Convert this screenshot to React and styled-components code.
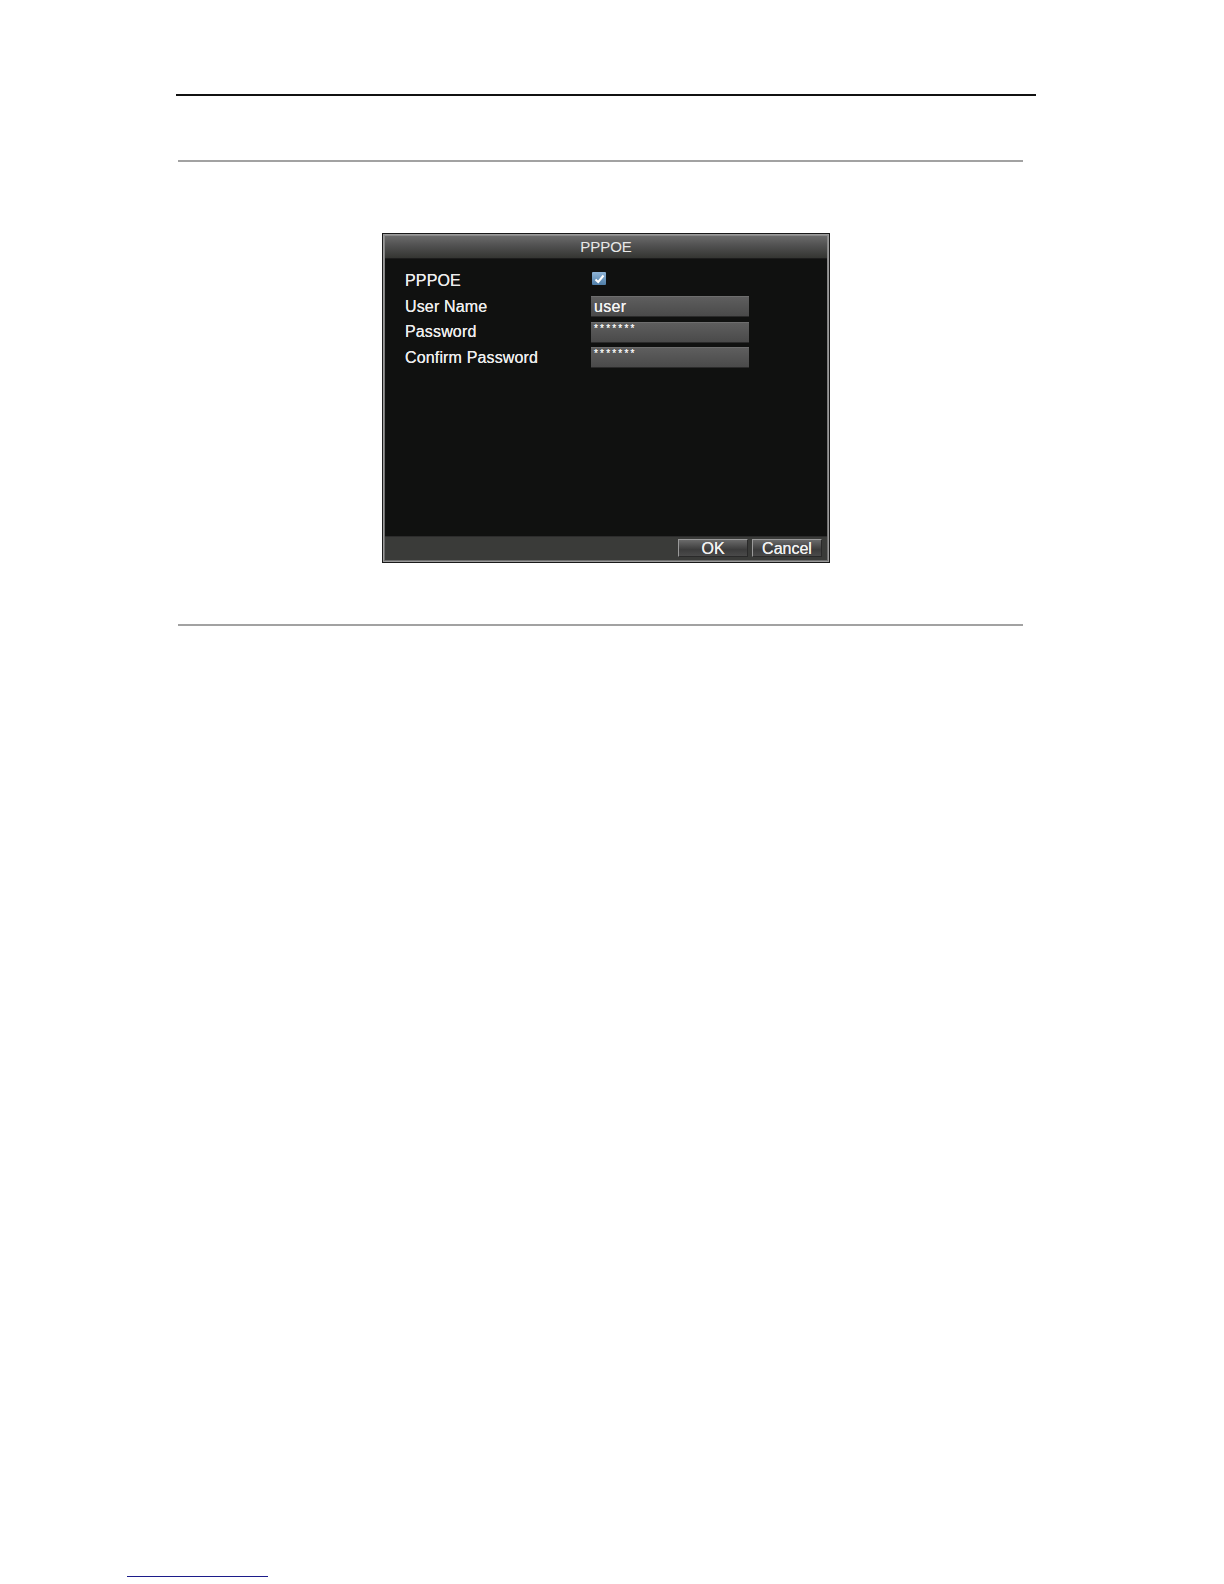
import React from 'react'
import styled, { createGlobalStyle } from 'styled-components'

const GlobalStyle = createGlobalStyle`
  html, body {
    margin: 0;
    padding: 0;
    background: #fff;
  }
  body {
    font-family: "Liberation Sans", Arial, sans-serif;
  }
`

const Page = styled.div`
  display: flex;
  flex-direction: column;
  background: #fff;
`

const TopRule = styled.div`
  flex: none;
  margin: 94px 0 0 176px;
  width: 860px;
  height: 1.5px;
  background: #111;
`

const Figure = styled.section`
  flex: none;
  margin: 64px 0 0 178px;
  width: 845px;
  border-top: 2px solid #a2a2a2;
  border-bottom: 2px solid #a2a2a2;
  padding: 71px 0 61px 204px;
  box-sizing: border-box;
`

const Dialog = styled.div`
  width: 448px;
  height: 330px;
  box-sizing: border-box;
  border: 1px solid #1a1a1a;
  padding: 2px;
  background: linear-gradient(#8a8a8a, #6e6e6e);
  display: flex;
  flex-direction: column;
  box-shadow: inset 0 0 0 1px #9a9a9a;
`

const TitleBar = styled.div`
  height: 22px;
  flex: none;
  background: linear-gradient(#6a6a6a 0%, #505050 45%, #343532 100%);
  color: #e8e8e8;
  font-size: 15px;
  line-height: 22px;
  text-align: center;
  border-bottom: 1px solid #1c1c1c;
`

const Body = styled.div`
  flex: 1;
  background: #101110;
  padding: 10px 0 0 20px;
`

const Form = styled.div`
  display: grid;
  grid-template-columns: 186px 158px;
  grid-auto-rows: 25.5px;
  align-items: center;
`

const Label = styled.div`
  color: #ececec;
  font-size: 16px;
  letter-spacing: 0.15px;
  text-shadow: 0 0 0.6px #fff;
`

const Check = styled.div`
  width: 14px;
  height: 13px;
  margin-top: -5px;
  margin-left: 1px;
  border-radius: 1px;
  background: linear-gradient(#8fb4d6, #4f7ea8);
  display: flex;
  align-items: center;
  justify-content: center;
`

const Field = styled.div`
  height: 21px;
  box-sizing: border-box;
  background: linear-gradient(#5e5e5e, #4a4a4a);
  border-top: 1px solid #6e6e6e;
  border-bottom: 1px solid #2a2a2a;
  color: #f2f2f2;
  padding-left: 3px;
  font-size: ${p => (p.masked ? '10px' : '16px')};
  line-height: ${p => (p.masked ? '12px' : '19px')};
  letter-spacing: ${p => (p.masked ? '2.2px' : '0.3px')};
  text-shadow: 0 0 0.6px #fff;
`

const ButtonBar = styled.div`
  height: 23px;
  flex: none;
  background: #3a3b39;
  border-top: 1px solid #2c2c2c;
  display: flex;
  justify-content: flex-end;
  align-items: center;
  gap: 4px;
  padding-right: 5px;
`

const Button = styled.div`
  width: 70px;
  height: 18px;
  box-sizing: border-box;
  border: 1px solid #9a9a9a;
  border-right-color: #2a2a2a;
  border-bottom-color: #2a2a2a;
  background: linear-gradient(#6a6a6a, #3c3c3c 60%, #4a4a4a);
  color: #f0f0f0;
  font-size: 16px;
  line-height: 17px;
  text-align: center;
  text-shadow: 0 0 0.6px #fff;
`

const FootRule = styled.div`
  flex: none;
  margin: 950px 0 0 127px;
  width: 141px;
  height: 1.5px;
  background: #1c1c8a;
`

const rows = [
  { label: 'User Name', value: 'user' },
  { label: 'Password', value: '*******', masked: true },
  { label: 'Confirm Password', value: '*******', masked: true },
]

export default function App() {
  return (
    <Page>
      <GlobalStyle />
      <TopRule />
      <Figure>
        <Dialog>
          <TitleBar>PPPOE</TitleBar>
          <Body>
            <Form>
              <Label>PPPOE</Label>
              <Check>
                <svg width="11" height="10" viewBox="0 0 11 10">
                  <path d="M1.5 5.5 L4.2 8 L9.5 1.5" fill="none" stroke="#fff" strokeWidth="2" />
                </svg>
              </Check>
              {rows.map(r => (
                <React.Fragment key={r.label}>
                  <Label>{r.label}</Label>
                  <Field masked={r.masked}>{r.value}</Field>
                </React.Fragment>
              ))}
            </Form>
          </Body>
          <ButtonBar>
            <Button>OK</Button>
            <Button>Cancel</Button>
          </ButtonBar>
        </Dialog>
      </Figure>
      <FootRule />
    </Page>
  )
}
